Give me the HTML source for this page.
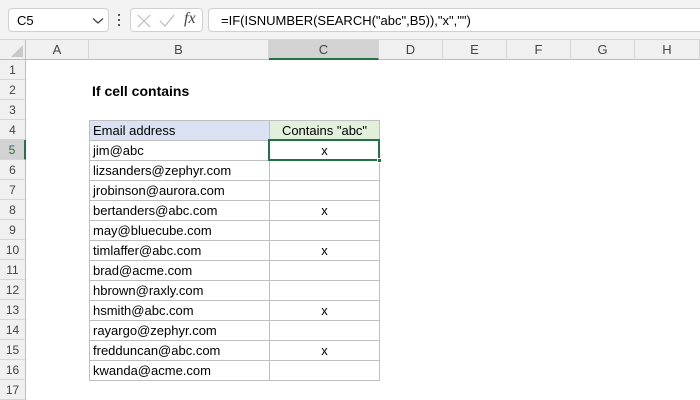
<!DOCTYPE html>
<html><head><style>
*{margin:0;padding:0;box-sizing:border-box}
body{width:700px;height:400px;overflow:hidden;background:#fff;font-family:"Liberation Sans",Calibri,sans-serif;position:relative;font-size:13px;color:#000}
.a{position:absolute}
.tb{left:0;top:0;width:700px;height:40px;background:#f3f3f3;border-bottom:1px solid #d4d4d4}
.box{background:#fff;border:1px solid #d0d0d0;border-radius:4px;height:24px;top:8px}
.ch{top:40px;height:20px;background:#f0f0f0;border-right:1px solid #d6d6d6;border-bottom:1px solid #bdbdbd;text-align:center;line-height:20px;color:#444;font-size:13px}
.rh{left:0;width:26px;height:20px;background:#f0f0f0;border-bottom:1px solid #d6d6d6;border-right:1px solid #bdbdbd;text-align:center;line-height:20px;color:#444;font-size:12px}
.c{height:21px;line-height:20px;border:1px solid #bfbfbf;margin:0 0 -1px -1px;padding-left:3px}
</style></head><body>
<div class="a tb"></div>
<div class="a box" style="left:8px;width:101px"><span class="a" style="left:8px;top:4px;font-size:13px">C5</span>
<svg class="a" style="left:83px;top:8px" width="12" height="8"><path d="M1 1.5L6 6L11 1.5" stroke="#444" stroke-width="1.3" fill="none"/></svg></div>
<div class="a" style="left:118px;top:14px;width:2px;height:2px;background:#555;box-shadow:0 5px #555,0 10px #555"></div>
<div class="a box" style="left:130px;width:73px">
<svg class="a" style="left:6px;top:5px" width="14" height="14"><path d="M1 1L13 13M13 1L1 13" stroke="#bbb" stroke-width="1.2"/></svg>
<svg class="a" style="left:28px;top:5px" width="16" height="14"><path d="M1 7L6 12L15 1" stroke="#bbb" stroke-width="1.2" fill="none"/></svg>
<span class="a" style="left:53px;top:1px;font-family:'Liberation Serif',serif;font-style:italic;font-size:16px;color:#444">fx</span></div>
<div class="a box" style="left:208px;width:500px;border-radius:4px 0 0 4px"><span class="a" style="left:12px;top:4px;font-size:13px">=IF(ISNUMBER(SEARCH("abc",B5)),"x","")</span></div>
<div class="a" style="left:0;top:40px;width:26px;height:20px;background:#f0f0f0;border-right:1px solid #bdbdbd;border-bottom:1px solid #bdbdbd"><svg class="a" style="left:11px;top:5px" width="12" height="12"><path d="M12 0V12H0Z" fill="#c8c8c8"/></svg></div>
<div class="a ch" style="left:26px;width:63px">A</div>
<div class="a ch" style="left:89px;width:180px">B</div>
<div class="a ch" style="left:269px;width:110px;background:#d2d2d2;border-bottom:2px solid #217346">C</div>
<div class="a ch" style="left:379px;width:64px">D</div>
<div class="a ch" style="left:443px;width:64px">E</div>
<div class="a ch" style="left:507px;width:64px">F</div>
<div class="a ch" style="left:571px;width:64px">G</div>
<div class="a ch" style="left:635px;width:65px">H</div>
<div class="a rh" style="top:60px">1</div>
<div class="a rh" style="top:80px">2</div>
<div class="a rh" style="top:100px">3</div>
<div class="a rh" style="top:120px">4</div>
<div class="a rh" style="top:140px;background:#d2d2d2;border-right:2px solid #217346;color:#217346">5</div>
<div class="a rh" style="top:160px">6</div>
<div class="a rh" style="top:180px">7</div>
<div class="a rh" style="top:200px">8</div>
<div class="a rh" style="top:220px">9</div>
<div class="a rh" style="top:240px">10</div>
<div class="a rh" style="top:260px">11</div>
<div class="a rh" style="top:280px">12</div>
<div class="a rh" style="top:300px">13</div>
<div class="a rh" style="top:320px">14</div>
<div class="a rh" style="top:340px">15</div>
<div class="a rh" style="top:360px">16</div>
<div class="a rh" style="top:380px">17</div>
<div class="a" style="left:92px;top:83px;font-weight:bold;font-size:14px">If cell contains</div>
<div class="a" style="left:90px;top:120px;width:290px">
<div style="display:flex"><div class="c" style="width:181px;background:#d9e1f2">Email address</div><div class="c" style="width:111px;background:#e2efda;text-align:center;padding:0">Contains "abc"</div></div>
<div style="display:flex"><div class="c" style="width:181px">jim@abc</div><div class="c" style="width:111px;text-align:center;padding:0">x</div></div>
<div style="display:flex"><div class="c" style="width:181px">lizsanders@zephyr.com</div><div class="c" style="width:111px"></div></div>
<div style="display:flex"><div class="c" style="width:181px">jrobinson@aurora.com</div><div class="c" style="width:111px"></div></div>
<div style="display:flex"><div class="c" style="width:181px">bertanders@abc.com</div><div class="c" style="width:111px;text-align:center;padding:0">x</div></div>
<div style="display:flex"><div class="c" style="width:181px">may@bluecube.com</div><div class="c" style="width:111px"></div></div>
<div style="display:flex"><div class="c" style="width:181px">timlaffer@abc.com</div><div class="c" style="width:111px;text-align:center;padding:0">x</div></div>
<div style="display:flex"><div class="c" style="width:181px">brad@acme.com</div><div class="c" style="width:111px"></div></div>
<div style="display:flex"><div class="c" style="width:181px">hbrown@raxly.com</div><div class="c" style="width:111px"></div></div>
<div style="display:flex"><div class="c" style="width:181px">hsmith@abc.com</div><div class="c" style="width:111px;text-align:center;padding:0">x</div></div>
<div style="display:flex"><div class="c" style="width:181px">rayargo@zephyr.com</div><div class="c" style="width:111px"></div></div>
<div style="display:flex"><div class="c" style="width:181px">fredduncan@abc.com</div><div class="c" style="width:111px;text-align:center;padding:0">x</div></div>
<div style="display:flex"><div class="c" style="width:181px">kwanda@acme.com</div><div class="c" style="width:111px"></div></div>
</div>
<div class="a" style="left:268px;top:139px;width:112px;height:22px;border:2px solid #217346"></div>
<div class="a" style="left:377px;top:158px;width:5px;height:5px;background:#217346;border:1px solid #fff"></div>
</body></html>
